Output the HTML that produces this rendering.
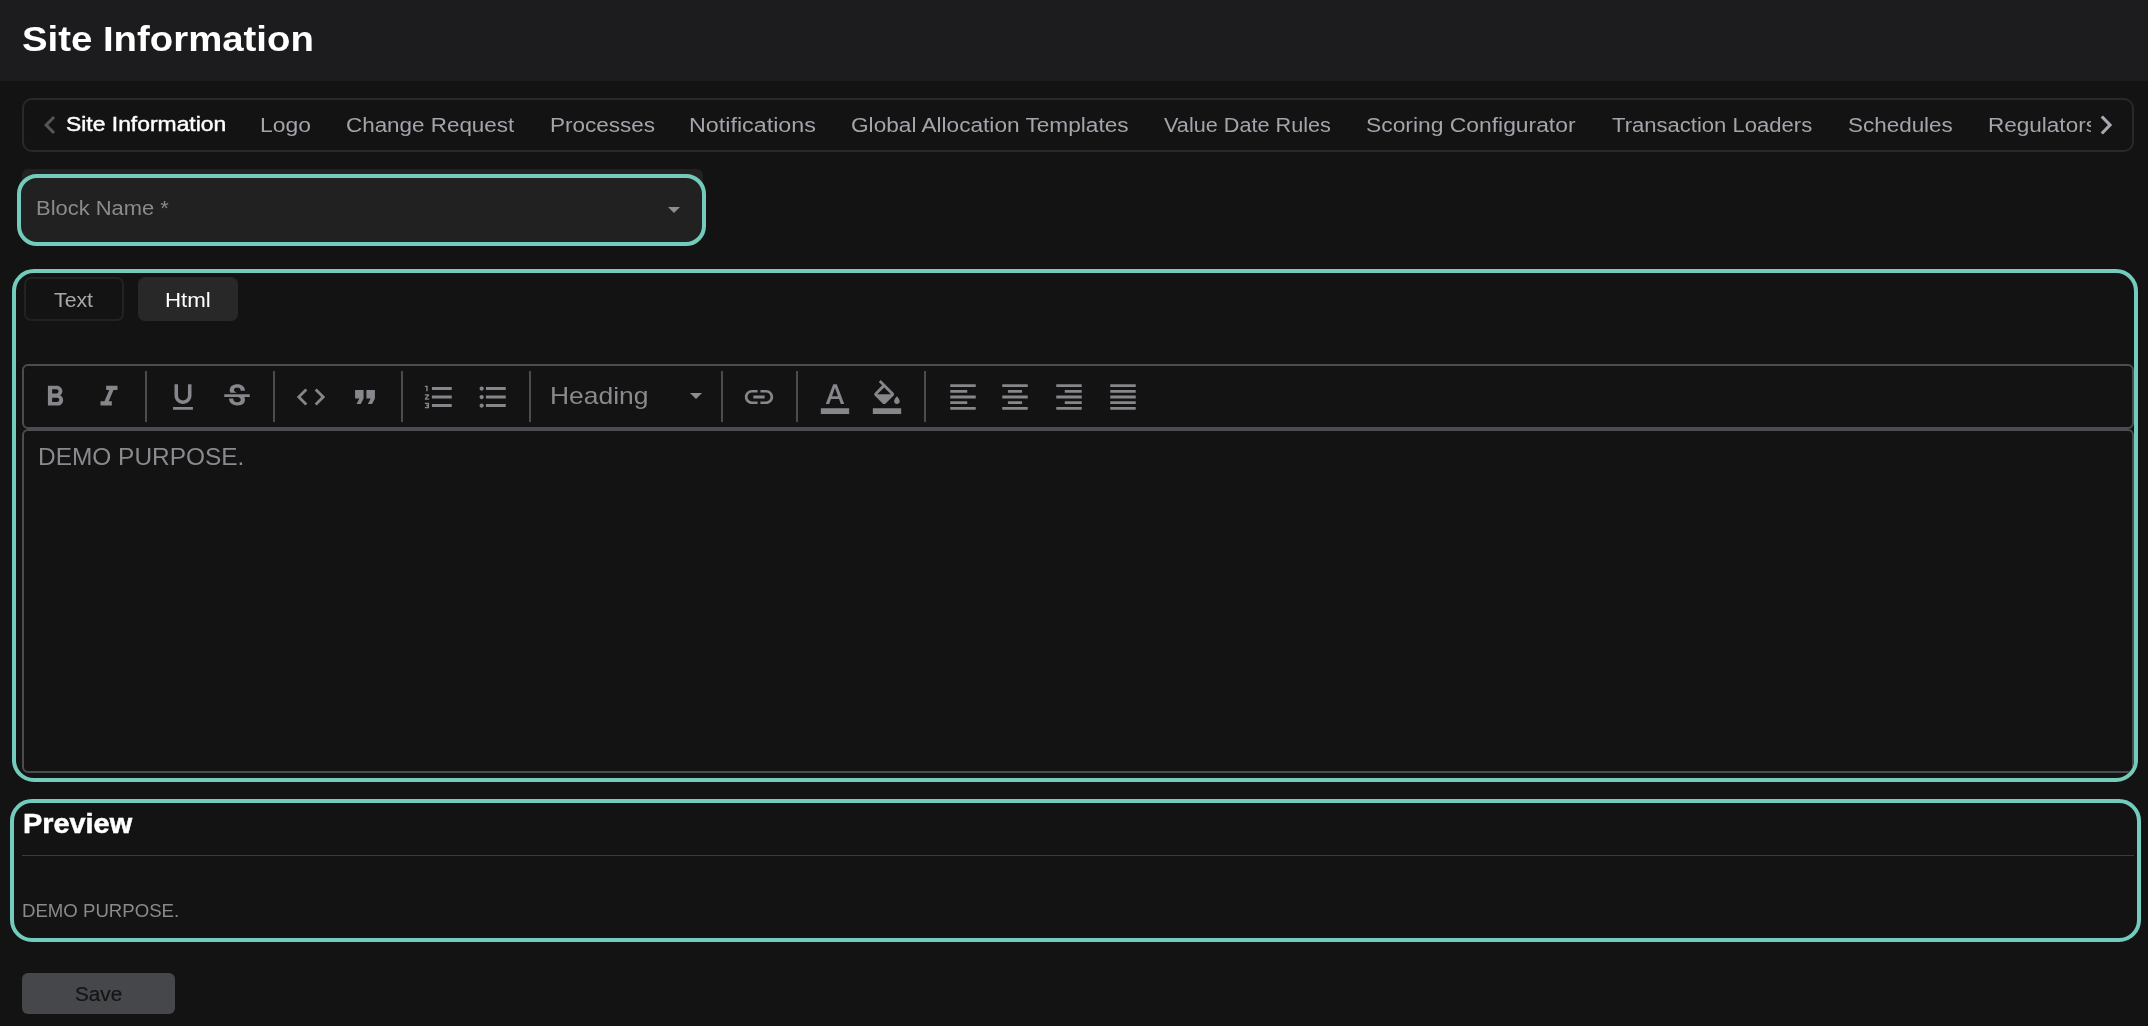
<!DOCTYPE html>
<html><head><meta charset="utf-8"><style>
*{box-sizing:border-box;margin:0;padding:0}
html,body{width:2148px;height:1026px;overflow:hidden;background:#131313;font-family:"Liberation Sans",sans-serif}
.a{position:absolute}
.t{position:absolute;white-space:pre;line-height:1;will-change:transform;font-family:"Liberation Sans",sans-serif}
.ic{position:absolute;width:34px;height:34px;fill:#86868b}
.sep{position:absolute;top:371px;width:2px;height:51px;background:#4b4c50}
</style></head><body>
<div class="a" style="left:0;top:0;width:2148px;height:81px;background:#1c1c1f"></div>
<div class="t" style="left:21.90px;top:21.20px;font-weight:bold;font-size:35px;transform:scaleX(1.0954);transform-origin:0 0;color:#ffffff;">Site Information</div>
<div class="a" style="left:22px;top:98px;width:2112px;height:54px;border:2px solid #29292b;border-radius:10px"></div>
<svg class="a" style="left:32px;top:107px;width:36px;height:36px;fill:#55565a" viewBox="0 0 24 24"><path d="M15.41 7.41L14 6l-6 6 6 6 1.41-1.41L10.83 12z"/></svg>
<div class="t" style="left:65.60px;top:114.20px;font-weight:normal;font-size:20.5px;transform:scaleX(1.1162);transform-origin:0 0;color:#ffffff;-webkit-text-stroke:0.45px #fff;">Site Information</div>
<div class="t" style="left:260.46px;top:115.00px;font-weight:normal;font-size:20px;transform:scaleX(1.1437);transform-origin:0 0;color:#a3a5ab;">Logo</div>
<div class="t" style="left:345.68px;top:115.00px;font-weight:normal;font-size:20px;transform:scaleX(1.1207);transform-origin:0 0;color:#a3a5ab;">Change Request</div>
<div class="t" style="left:549.78px;top:115.00px;font-weight:normal;font-size:20px;transform:scaleX(1.1248);transform-origin:0 0;color:#a3a5ab;">Processes</div>
<div class="t" style="left:689.44px;top:115.00px;font-weight:normal;font-size:20px;transform:scaleX(1.1646);transform-origin:0 0;color:#a3a5ab;">Notifications</div>
<div class="t" style="left:850.77px;top:115.00px;font-weight:normal;font-size:20px;transform:scaleX(1.1314);transform-origin:0 0;color:#a3a5ab;">Global Allocation Templates</div>
<div class="t" style="left:1163.70px;top:115.00px;font-weight:normal;font-size:20px;transform:scaleX(1.0826);transform-origin:0 0;color:#a3a5ab;">Value Date Rules</div>
<div class="t" style="left:1366.30px;top:115.00px;font-weight:normal;font-size:20px;transform:scaleX(1.1422);transform-origin:0 0;color:#a3a5ab;">Scoring Configurator</div>
<div class="t" style="left:1612.00px;top:115.00px;font-weight:normal;font-size:20px;transform:scaleX(1.1025);transform-origin:0 0;color:#a3a5ab;">Transaction Loaders</div>
<div class="t" style="left:1848.30px;top:115.00px;font-weight:normal;font-size:20px;transform:scaleX(1.1221);transform-origin:0 0;color:#a3a5ab;">Schedules</div>
<div class="a" style="left:1988px;top:100px;width:103px;height:48px;overflow:hidden"><div style="position:relative;left:-1988px;top:-100px"><div class="t" style="left:1988.07px;top:115.00px;font-weight:normal;font-size:20px;transform:scaleX(1.1261);transform-origin:0 0;color:#a3a5ab;">Regulators</div></div></div>
<svg class="a" style="left:2090px;top:105px;width:30px;height:40px" viewBox="2090 105 30 40"><polyline points="2101.8,116.5 2110,125 2101.8,133.5" fill="none" stroke="#a7a9b0" stroke-width="3.2" stroke-linejoin="miter" stroke-linecap="butt"/></svg>

<div class="a" style="left:22px;top:169px;width:681px;height:72px;background:#222222;border-radius:6px"></div>
<div class="a" style="left:17px;top:173.5px;width:689px;height:72.5px;border:4px solid #73cbbb;border-radius:20px;background:#212121"></div>
<div class="t" style="left:35.80px;top:198.00px;font-weight:normal;font-size:20px;transform:scaleX(1.0966);transform-origin:0 0;color:#8b8b8f;">Block Name *</div>
<svg class="a" style="left:668px;top:207px;width:12px;height:6px;fill:#8e8e92" viewBox="0 0 12 6"><path d="M0 0h12L6 6z"/></svg>

<div class="a" style="left:12px;top:269px;width:2126px;height:513px;border:4px solid #73cbbb;border-radius:22px"></div>
<div class="a" style="left:24px;top:277px;width:99.5px;height:44px;border:2px solid #222222;border-radius:7px"></div>
<div class="a" style="left:138px;top:277px;width:100px;height:44px;background:#282828;border-radius:7px"></div>
<div class="t" style="left:53.80px;top:290.00px;font-weight:normal;font-size:20px;transform:scaleX(1.0640);transform-origin:0 0;color:#a9a9ad;">Text</div>
<div class="t" style="left:164.69px;top:290.00px;font-weight:normal;font-size:20px;transform:scaleX(1.1145);transform-origin:0 0;color:#ffffff;">Html</div>
<div class="a" style="left:16px;top:273px;width:2118px;height:505px;overflow:hidden;border-radius:18px"><div class="a" style="left:6px;top:91px;width:2112px;height:65px;border:2px solid #4b4c50;border-radius:6px"></div><div class="a" style="left:6px;top:156px;width:2112px;height:344px;border:2px solid #4b4c50;border-radius:6px"></div></div>
<div class="sep" style="left:144.8px"></div><div class="sep" style="left:272.9px"></div><div class="sep" style="left:401.0px"></div><div class="sep" style="left:529.0px"></div><div class="sep" style="left:720.9px"></div><div class="sep" style="left:795.5px"></div><div class="sep" style="left:923.9px"></div>
<svg class="ic" style="left:38px;top:379.6px" viewBox="0 0 24 24"><path fill-rule="evenodd" d="M15.6 10.79c.97-.67 1.65-1.77 1.65-2.79 0-2.26-1.75-4-4-4H7v14h7.04c2.09 0 3.71-1.7 3.71-3.79 0-1.52-.86-2.82-2.15-3.42zM10 6.5h3c.83 0 1.5.67 1.5 1.5s-.67 1.5-1.5 1.5h-3v-3zm3.5 9H10v-3h3.5c.83 0 1.5.67 1.5 1.5s-.67 1.5-1.5 1.5z"/></svg>
<svg class="ic" style="left:91.8px;top:379.6px" viewBox="0 0 24 24"><path fill-rule="evenodd" d="M10 4v3h2.21l-3.42 8H6v3h8v-3h-2.21l3.42-8H18V4z"/></svg>
<svg class="ic" style="left:165.9px;top:380px" viewBox="0 0 24 24"><path fill-rule="evenodd" d="M12 17c3.31 0 6-2.690 6-6V3h-2.5v8c0 1.93-1.57 3.5-3.5 3.5S8.5 12.93 8.5 11V3H6v8c0 3.31 2.69 6 6 6zm-7 2v2h14v-2H5z"/></svg>
<svg class="ic" style="left:220px;top:379.7px" viewBox="0 0 24 24"><path fill-rule="evenodd" d="M7.24 8.75c-.26-.48-.39-1.03-.39-1.67 0-.61.13-1.16.4-1.67.26-.5.63-.93 1.11-1.29.48-.35 1.050-.63 1.7-.83.66-.19 1.39-.29 2.18-.29.81 0 1.54.11 2.21.34.66.22 1.23.54 1.69.94.47.4.83.88 1.08 1.43.25.55.38 1.15.38 1.81h-3.01c0-.31-.05-.59-.15-.85-.09-.27-.24-.49-.44-.68-.2-.19-.45-.33-.75-.44-.3-.1-.66-.16-1.06-.16-.39 0-.74.04-1.03.13-.29.09-.53.21-.72.36-.19.16-.34.34-.44.55-.1.21-.15.43-.15.66 0 .48.25.88.74 1.21.38.25.77.48 1.41.7H7.39c-.05-.08-.11-.17-.15-.25zM21 12v-2H3v2h9.62c.18.07.4.14.55.2.37.17.66.34.87.51.21.17.35.36.43.57.07.2.11.43.11.69 0 .23-.05.45-.14.66-.09.2-.23.38-.42.53-.19.15-.42.26-.71.35-.29.08-.63.13-1.01.13-.43 0-.83-.04-1.18-.13s-.66-.23-.91-.42c-.25-.19-.45-.44-.59-.75-.14-.31-.25-.76-.25-1.21H6.4c0 .55.08 1.13.24 1.58.16.45.37.85.65 1.21.28.35.6.66.98.92.37.26.78.48 1.22.65.44.17.9.3 1.38.39.48.08.96.13 1.44.13.8 0 1.53-.09 2.18-.28s1.21-.45 1.67-.79c.46-.34.82-.77 1.07-1.27s.38-1.07.38-1.71c0-.6-.1-1.14-.31-1.61-.05-.11-.11-.23-.17-.33H21z"/></svg>
<svg class="ic" style="left:294px;top:380px" viewBox="0 0 24 24"><path fill-rule="evenodd" d="M9.4 16.6L4.8 12l4.6-4.6L8 6l-6 6 6 6 1.4-1.4zm5.2 0l4.6-4.6-4.6-4.6L16 6l6 6-6 6-1.4-1.4z"/></svg>
<svg class="ic" style="left:348.1px;top:380px" viewBox="0 0 24 24"><path fill-rule="evenodd" d="M6 17h3l2-4V7H5v6h3zm8 0h3l2-4V7h-6v6h3z"/></svg>
<svg class="ic" style="left:421.9px;top:380px" viewBox="0 0 24 24"><path fill-rule="evenodd" d="M2 17h2v.5H3v1h1v.5H2v1h3v-4H2v1zm1-9h1V4H2v1h1v3zm-1 3h1.8L2 13.1v.9h3v-1H3.2L5 10.9V10H2v1zm5-6v2h14V5H7zm0 14h14v-2H7v2zm0-6h14v-2H7v2z"/></svg>
<svg class="ic" style="left:476px;top:380.1px" viewBox="0 0 24 24"><path fill-rule="evenodd" d="M4 10.5c-.83 0-1.5.67-1.5 1.5s.67 1.5 1.5 1.5 1.5-.67 1.5-1.5-.67-1.5-1.5-1.5zm0-6c-.83 0-1.5.67-1.5 1.5S3.17 7.5 4 7.5 5.5 6.830 5.5 6 4.83 4.5 4 4.5zm0 12c-.83 0-1.5.68-1.5 1.5s.68 1.5 1.5 1.5 1.5-.68 1.5-1.5-.67-1.5-1.5-1.5zM7 19h14v-2H7v2zm0-6h14v-2H7v2zm0-8v2h14V5H7z"/></svg>
<svg class="ic" style="left:742px;top:380.1px" viewBox="0 0 24 24"><path fill-rule="evenodd" d="M3.9 12c0-1.71 1.39-3.1 3.1-3.1h4V7H7c-2.76 0-5 2.24-5 5s2.24 5 5 5h4v-1.9H7c-1.71 0-3.1-1.39-3.1-3.1zM8 13h8v-2H8v2zm9-6h-4v1.9h4c1.71 0 3.1 1.39 3.1 3.1s-1.39 3.1-3.1 3.1h-4V17h4c2.76 0 5-2.24 5-5s-2.24-5-5-5z"/></svg>
<svg class="ic" style="left:818px;top:379.8px" viewBox="0 0 24 24"><path fill-rule="evenodd" d="M2 20h20v4H2v-4zm3.49-3h2.42l1.27-3.58h5.65L16.09 17h2.42L13.25 3h-2.5L5.49 17zm4.42-5.61l2.03-5.79h.12l2.03 5.79H9.91z"/></svg>
<svg class="ic" style="left:870px;top:379.9px" viewBox="0 0 24 24"><path fill-rule="evenodd" d="M16.56 8.94L7.62 0 6.21 1.41l2.38 2.38-5.15 5.15c-.59.59-.59 1.54 0 2.12l5.5 5.5c.29.29.68.44 1.06.44s.77-.15 1.060-.44l5.5-5.5c.59-.58.59-1.53 0-2.12zM5.21 10L10 5.21 14.79 10H5.21zM19 11.5s-2 2.17-2 3.5c0 1.1.9 2 2 2s2-.9 2-2c0-1.33-2-3.5-2-3.5zM2 20h20v4H2v-4z"/></svg>
<svg class="ic" style="left:946px;top:380px" viewBox="0 0 24 24"><path fill-rule="evenodd" d="M15 15H3v2h12v-2zm0-8H3v2h12V7zM3 13h18v-2H3v2zm0 8h18v-2H3v2zM3 3v2h18V3H3z"/></svg>
<svg class="ic" style="left:998px;top:380px" viewBox="0 0 24 24"><path fill-rule="evenodd" d="M7 15v2h10v-2H7zm-4 6h18v-2H3v2zm0-8h18v-2H3v2zm4-6v2h10V7H7zM3 3v2h18V3H3z"/></svg>
<svg class="ic" style="left:1052px;top:380px" viewBox="0 0 24 24"><path fill-rule="evenodd" d="M3 21h18v-2H3v2zm6-4h12v-2H9v2zm-6-4h18v-2H3v2zm6-4h12V7H9v2zM3 3v2h18V3H3z"/></svg>
<svg class="ic" style="left:1106px;top:380px" viewBox="0 0 24 24"><path fill-rule="evenodd" d="M3 21h18v-2H3v2zm0-4h18v-2H3v2zm0-4h18v-2H3v2zm0-4h18V7H3v2zm0-6v2h18V3H3z"/></svg>

<div class="t" style="left:550.20px;top:384.20px;font-weight:normal;font-size:24px;transform:scaleX(1.1016);transform-origin:0 0;color:#8a8a8e;">Heading</div>
<svg class="a" style="left:690px;top:393px;width:12px;height:6px;fill:#8e8e92" viewBox="0 0 12 6"><path d="M0 0h12L6 6z"/></svg>
<div class="t" style="left:38.18px;top:445.00px;font-weight:normal;font-size:24px;transform:scaleX(1.0183);transform-origin:0 0;color:#8a8a8e;">DEMO PURPOSE.</div>

<div class="a" style="left:10.3px;top:799px;width:2130.7px;height:143px;border:4px solid #73cbbb;border-radius:22px"></div>
<div class="t" style="left:23.13px;top:811.20px;font-weight:bold;font-size:27px;transform:scaleX(1.0689);transform-origin:0 0;color:#ffffff;-webkit-text-stroke:0.5px #fff;">Preview</div>
<div class="a" style="left:22px;top:855px;width:2112px;height:1px;background:#3a3a3a"></div>
<div class="t" style="left:21.77px;top:902.30px;font-weight:normal;font-size:18px;transform:scaleX(1.0338);transform-origin:0 0;color:#8a8a8e;">DEMO PURPOSE.</div>
<div class="a" style="left:22px;top:973px;width:153px;height:41px;background:#46474b;border-radius:6px"></div>
<div class="t" style="left:75.20px;top:984.00px;font-weight:normal;font-size:20.5px;transform:scaleX(1.0103);transform-origin:0 0;color:#141414;-webkit-text-stroke:0.2px #141414;">Save</div>
</body></html>
